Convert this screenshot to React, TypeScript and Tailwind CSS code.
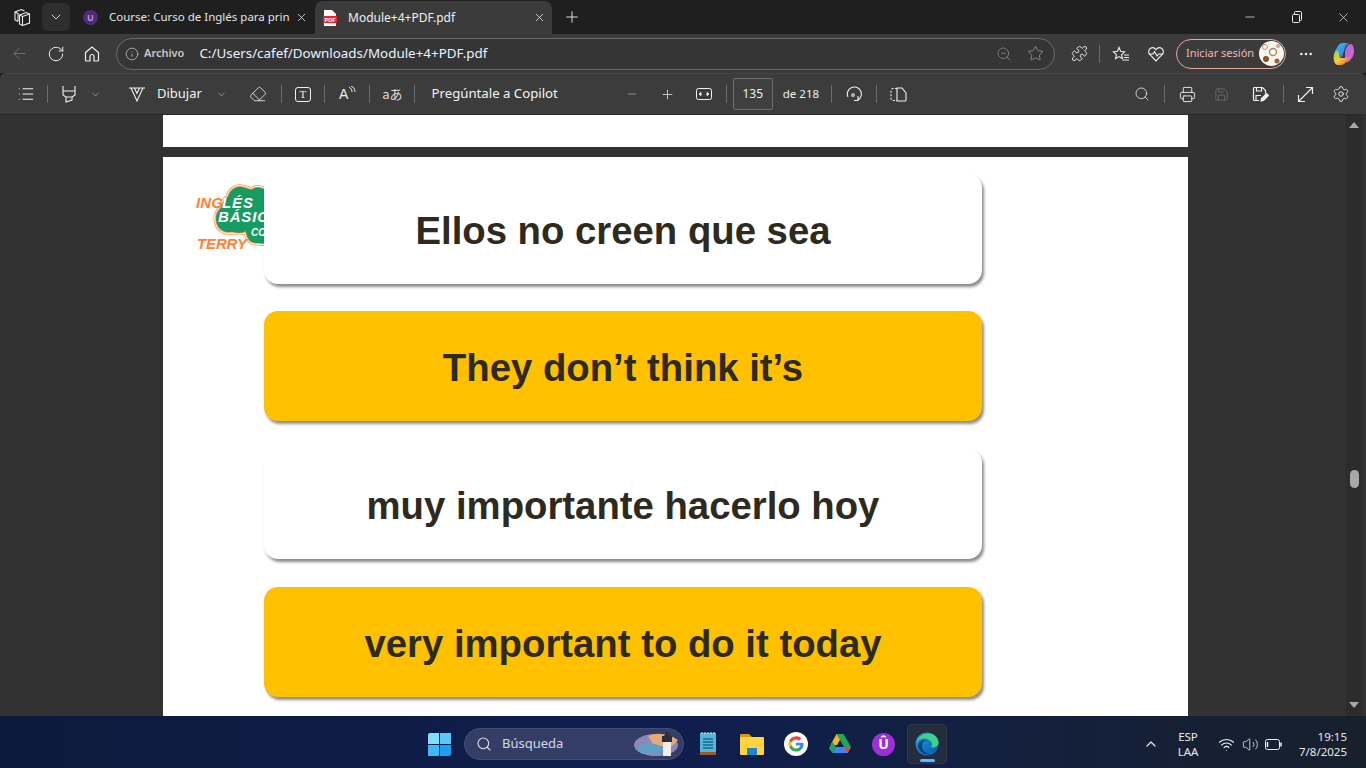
import {
  ArrowLeft, RotateCw, Info, ZoomOut, Star, Puzzle, ChevronDown, ChevronUp, X, Plus, Minus, List,
  Eraser, Search, Printer, Save, Settings, MoreHorizontal, Wifi, Volume2,
} from 'lucide-react';

const ui = 'font-["Noto_Sans",sans-serif]';

const Sep = ({ className }: { className: string }) => <div className={`w-px h-[18px] bg-[#6b6b6b] shrink-0 ${className}`} />;

const Cards = [
  { text: 'Ellos no creen que sea', bg: 'bg-white', mt: 'mt-0' },
  { text: 'They don’t think it’s', bg: 'bg-[#ffc000]', mt: 'mt-[27px]' },
  { text: 'muy importante hacerlo hoy', bg: 'bg-white', mt: 'mt-[28px]' },
  { text: 'very important to do it today', bg: 'bg-[#ffc000]', mt: 'mt-[28px]' },
];

const Logo = () => (
  <svg viewBox="0 0 70 70" className="absolute left-[33px] top-[26px] w-[70px] h-[70px]">
    <path
      d="M31 13C33 6 40 1 47 3C52 4 54 6 56 5C60 2 68 3 72 8L72 62L58 61C52 60 50 55 49 50C44 52 40 51 36 50C28 52 20 47 19 38C18 32 20 28 24 24C25 19 27 16 31 13Z"
      fill="#169b62"
      stroke="#ff9a55"
      strokeWidth="2.600"
    />
    <path
      d="M31 13C33 6 40 1 47 3C52 4 54 6 56 5C60 2 68 3 72 8L72 62L58 61C52 60 50 55 49 50C44 52 40 51 36 50C28 52 20 47 19 38C18 32 20 28 24 24C25 19 27 16 31 13Z"
      fill="none"
      stroke="#fff"
      strokeWidth="1"
    />
    <g fontFamily="Liberation Sans" fontWeight="700" fontStyle="italic">
      <text x="0" y="25" fontSize="15" fill="#ff8233" textLength="27">ING</text>
      <text x="26" y="25" fontSize="15" fill="#fff" textLength="31">LÉS</text>
      <text x="22" y="39" fontSize="15" fill="#fff" textLength="50">BÁSIC</text>
      <text x="55" y="53" fontSize="10" fill="#fff">CO</text>
      <text x="1" y="66" fontSize="15" fill="#ff8233" textLength="50">TERRY</text>
    </g>
  </svg>
);

const TabBar = () => (
  <div className="h-[34px] bg-[#1f1f1f] flex items-stretch text-white">
    <div className="w-[42px] pl-[1px] flex items-center justify-center">
      <svg width="18" height="18" viewBox="0 0 18 18" fill="none" stroke="#ececec" strokeWidth="1.100">
        <path d="M6.500 7l7-2.500 3 1.500v9l-7 2.500-3-1.500z" />
        <path d="M6.500 7l3 1.500 7-2.500M9.500 8.500v8.500" />
        <path d="M5 13.500l-3-1.500V4l6.500-2.500 3 1.500" />
        <path d="M2 4l3 1.500V13" />
      </svg>
    </div>
    <div className="w-[28px] h-[28px] mt-[3px] rounded-md bg-[#2e2e2e] flex items-center justify-center">
      <ChevronDown size={16} strokeWidth={1.400} color="#e0e0e0" />
    </div>
    <div className="w-[245px] flex items-center pl-[13px]">
      <div className="w-[15px] h-[15px] rounded-full bg-[#4f2a7a] flex items-center justify-center text-[9px] font-bold text-[#a79ac0] leading-none">U</div>
      <div className="ml-[8px] pl-[3px] w-[180px] whitespace-nowrap text-[11.500px] text-[#e4e4e4]">Course: Curso de Inglés para prin</div>
      <X size={13} strokeWidth={1.500} color="#e8e8e8" className="ml-[9px]" />
    </div>
    <div className="w-[237px] mt-[1px] bg-[#3b3b3b] rounded-t-lg flex items-center pl-[8px]">
      <svg width="14" height="16" viewBox="0 0 14 16">
        <path d="M1 0h8l4 4v12H1z" fill="#fff" />
        <rect x="0" y="6" width="14" height="7" fill="#e5252a" />
        <text x="7" y="12" fontSize="5.500" fontWeight="700" fill="#fff" textAnchor="middle" fontFamily="Liberation Sans">PDF</text>
      </svg>
      <div className="ml-[11px] w-[185px] text-[12px] text-[#efefef]">Module+4+PDF.pdf</div>
      <X size={13} strokeWidth={1.500} color="#e8e8e8" />
    </div>
    <div className="ml-[11px] flex items-center">
      <Plus size={18} strokeWidth={1.200} color="#f0f0f0" />
    </div>
    <div className="ml-auto flex items-center pr-[15px]">
      <Minus size={14} strokeWidth={1.200} color="#eee" />
      <svg width="12" height="12" viewBox="0 0 12 12" fill="none" stroke="#eee" className="ml-[34px]">
        <rect x="1.500" y="3.500" width="7" height="8" rx="1" />
        <path d="M3.500 3.500V1.500a1 1 0 0 1 1-1h5a1 1 0 0 1 1 1v7a1 1 0 0 1-1 1h-1" />
      </svg>
      <X size={15} strokeWidth={1.100} color="#eee" className="ml-[33px]" />
    </div>
  </div>
);

const AddressBar = () => (
  <div className="h-[39px] bg-[#3b3b3b] flex items-center text-white">
    <ArrowLeft size={19} strokeWidth={1.100} color="#777" className="ml-[10px]" />
    <RotateCw size={18} strokeWidth={1.300} color="#f0f0f0" className="ml-[18px]" />
    <svg width="18" height="18" viewBox="0 0 18 18" fill="none" stroke="#f0f0f0" strokeWidth="1.200" className="ml-[18px]">
      <path d="M2.500 7.500L9 2l6.500 5.500V15a1 1 0 0 1-1 1H11v-4.500a2 2 0 0 0-4 0V16H3.500a1 1 0 0 1-1-1z" />
    </svg>
    <div className="ml-[15px] w-[939px] h-[32px] rounded-full border border-[#6a6a6a] bg-[#353535] flex items-center pl-[8px]">
      <Info size={14} strokeWidth={1.200} color="#d0d0d0" />
      <span className="ml-[5px] text-[11px] font-semibold text-[#c8c8c8]">Archivo</span>
      <span className="ml-[15px] text-[13.400px] text-[#eaf2ff]">C:/Users/cafef/Downloads/Module+4+PDF.pdf</span>
      <ZoomOut size={16} strokeWidth={1.100} color="#8f8f8f" className="ml-auto" />
      <Star size={17} strokeWidth={1.100} color="#9c9c9c" className="ml-[15px] mr-[10px]" />
    </div>
    <Puzzle size={17} strokeWidth={1.300} color="#f0f0f0" className="ml-[16px]" />
    <Sep className="ml-[11px]" />
    <svg width="18" height="18" viewBox="0 0 18 18" fill="none" stroke="#f0f0f0" strokeWidth="1.100" className="ml-[12px]">
      <path d="M7 2.500l1.600 3.800 4 .5-3 2.800.8 4-3.400-2-3.400 2 .8-4-3-2.800 4-.5z" />
      <path d="M12 10h5M12 12.500h5M10.500 15h6.500" />
    </svg>
    <svg width="18" height="18" viewBox="0 0 18 18" fill="none" stroke="#f0f0f0" strokeWidth="1.100" className="ml-[17px]">
      <path d="M9 16L2.800 9.500C1 7.500 1.500 4.500 3.500 3.300 5.500 2.200 7.800 3 9 4.800 10.200 3 12.500 2.200 14.500 3.300 16.500 4.500 17 7.500 15.200 9.500z" />
      <path d="M1.500 9h4.500l1.500-2.500L10 11l1.500-2h5" />
    </svg>
    <div className="ml-[11px] w-[110px] h-[30px] rounded-full border border-[#e2a8a2] flex items-center pl-[9px]">
      <span className="text-[11px] text-[#f2b8b0]">Iniciar sesión</span>
      <svg width="25" height="25" viewBox="0 0 25 25" className="ml-auto mr-[1px]">
        <circle cx="12.500" cy="12.500" r="12.500" fill="#f8f4ee" />
        <circle cx="6" cy="6" r="2.500" fill="none" stroke="#b89478" />
        <circle cx="14" cy="11" r="3.500" fill="none" stroke="#a88468" strokeWidth="1.300" />
        <circle cx="7" cy="18" r="3" fill="#8a5026" />
        <circle cx="18" cy="20" r="2.500" fill="#9a6436" />
        <circle cx="19" cy="5" r="2" fill="#c9a98e" />
      </svg>
    </div>
    <MoreHorizontal size={16} strokeWidth={1.800} color="#f0f0f0" className="ml-[12px]" />
    <svg width="24" height="24" viewBox="0 0 24 24" className="ml-[17px]">
      <defs>
        <linearGradient id="cpa" x1="0" y1="0" x2="1" y2="1">
          <stop offset="0" stopColor="#2fc4e8" />
          <stop offset="1" stopColor="#3a6fe8" />
        </linearGradient>
        <linearGradient id="cpb" x1="0" y1="0" x2="1" y2="1">
          <stop offset="0" stopColor="#8fd14f" />
          <stop offset="0.500" stopColor="#f7c93e" />
          <stop offset="1" stopColor="#f0533a" />
        </linearGradient>
        <linearGradient id="cpc" x1="0" y1="0" x2="1" y2="1">
          <stop offset="0" stopColor="#a56ae8" />
          <stop offset="1" stopColor="#ec5fc0" />
        </linearGradient>
      </defs>
      <path d="M14 9c1-3 3-7 5-7 3 0 4 3 4 7 0 5-3 9-6 11-2 1-4 0-3-4z" fill="url(#cpc)" />
      <path d="M6 6C7 3 9 1 12 1h6c-3 1-4 4-5 8l-2 6H6C2 15 3 9 6 6z" fill="url(#cpa)" />
      <path d="M3 12c1-3 3-4 4-3 1 1 1 3 1 5 0 2 2 2 5 2l5-1c-2 4-4 8-8 8H7c-4 0-5-6-4-11z" fill="url(#cpb)" />
    </svg>
  </div>
);

const PdfToolbar = () => (
  <div className="h-[42px] bg-[#3c3c3c] border-t border-[#444] border-b-[#2a2a2a] border-b rounded-t-md flex items-center text-white">
    <List size={18} strokeWidth={1.400} color="#f4f4f4" className="ml-[17px]" />
    <Sep className="ml-[12px]" />
    <svg width="16" height="18" viewBox="0 0 16 18" fill="none" stroke="#f0f0f0" strokeWidth="1.100" className="ml-[13px]">
      <path d="M2 1v5h12V1M2 6v4l3 2v5l6-2v-3l3-2V6M5 12h6" />
    </svg>
    <ChevronDown size={11} strokeWidth={1.300} color="#c8c8c8" className="ml-[13px]" />
    <svg width="18" height="18" viewBox="0 0 18 18" fill="none" stroke="#f0f0f0" strokeWidth="1.100" className="ml-[27px]">
      <path d="M1 3h16M3 3l6 13 6-13M6.500 3L9 8.500 11.500 3" />
    </svg>
    <span className="ml-[11px] text-[13px] text-[#f2f2f2]">Dibujar</span>
    <ChevronDown size={11} strokeWidth={1.300} color="#c8c8c8" className="ml-[14px]" />
    <Eraser size={18} strokeWidth={1.100} color="#f0f0f0" className="ml-[22px]" />
    <Sep className="ml-[14px]" />
    <div className="ml-[13px] w-[16px] h-[15px] border border-[#f0f0f0] rounded-[3px] flex items-center justify-center text-[11px] leading-none font-['Liberation_Serif',serif] text-[#f0f0f0]">T</div>
    <Sep className="ml-[13px]" />
    <span className="ml-[14px] text-[14px] text-[#eee] font-['Liberation_Sans',sans-serif] leading-none">A</span>
    <svg width="8" height="10" viewBox="0 0 8 10" fill="none" stroke="#eee" className="mb-[6px]">
      <path d="M1 1c2 1 3 3 3 5M3 0c3 1 4 4 4 6" />
    </svg>
    <Sep className="ml-[13px]" />
    <span className="ml-[12px] text-[13px] text-[#ddd] font-['Noto_Sans_CJK_JP',sans-serif]">aあ</span>
    <Sep className="ml-[11px]" />
    <span className="ml-[17px] text-[13.200px] text-[#f4f4f4]">Pregúntale a Copilot</span>
    <Minus size={12} strokeWidth={1.500} color="#aaa" className="ml-[68px]" />
    <Plus size={15} strokeWidth={1.200} color="#f0f0f0" className="ml-[22px]" />
    <svg width="16" height="14" viewBox="0 0 16 14" fill="none" stroke="#f0f0f0" className="ml-[21px]">
      <rect x="0.500" y="1.500" width="15" height="11" rx="2" />
      <path d="M3 7l2-1.500v3zM13 7l-2-1.500v3z" fill="#f0f0f0" />
    </svg>
    <Sep className="ml-[14px]" />
    <div className="ml-[6px] w-[40px] h-[32px] bg-[#3f3f3f] border border-[#6e6e6e] rounded-[2px] flex items-center justify-center text-[12px] text-[#f0f0f0]">135</div>
    <span className="ml-[10px] text-[11.500px] text-[#f0f0f0]">de 218</span>
    <Sep className="ml-[12px]" />
    <svg width="17" height="17" viewBox="0 0 17 17" fill="none" stroke="#f0f0f0" strokeWidth="1.100" className="ml-[13px]">
      <path d="M3 11A7 7 0 1 1 13 14M13 10v4.500H9" />
      <circle cx="8" cy="9" r="1.300" />
    </svg>
    <Sep className="ml-[14px]" />
    <svg width="17" height="15" viewBox="0 0 17 15" fill="none" stroke="#f0f0f0" strokeWidth="1.100" className="ml-[13px]">
      <path d="M7 1.500H3a2 2 0 0 0-2 2v8a2 2 0 0 0 2 2h4" strokeDasharray="2 1.500" />
      <path d="M7 1v13h8a1 1 0 0 0 1-1V6l-4-5z" />
    </svg>
    <Search size={16} strokeWidth={1.200} color="#f0f0f0" className="ml-[227px]" />
    <Sep className="ml-[14px]" />
    <Printer size={17} strokeWidth={1.300} color="#f0f0f0" className="ml-[14px]" />
    <Save size={15} strokeWidth={1.100} color="#777" className="ml-[18px]" />
    <svg width="18" height="18" viewBox="0 0 18 18" fill="none" stroke="#f0f0f0" strokeWidth="1.200" className="ml-[22px]">
      <path d="M8 15.500H3.500a1 1 0 0 1-1-1v-11a1 1 0 0 1 1-1h8l3 3v3" />
      <path d="M5.500 2.500v3.500h5V2.500M5 15v-4.500h5" />
      <path d="M10 16l.5-2.500 5-5 2 2-5 5z" fill="#f0f0f0" />
    </svg>
    <Sep className="ml-[14px]" />
    <svg width="17" height="17" viewBox="0 0 17 17" fill="none" stroke="#f0f0f0" strokeWidth="1.200" className="ml-[13px]">
      <path d="M1.500 15.500L15.500 1.500M9 1.500h6.500V8M1.500 9v6.500H8" />
    </svg>
    <Settings size={18} strokeWidth={1.200} color="#f0f0f0" className="ml-[18px]" />
  </div>
);

const Viewer = () => (
  <div className="relative h-[601px] bg-[#323232] overflow-hidden">
    <div className="ml-[163px] w-[1025px] h-[32px] bg-white" />
    <div className="relative ml-[163px] w-[1025px] h-[600px] mt-[10px] bg-white pl-[101px] pt-[17px] font-['Liberation_Sans',sans-serif]">
      <Logo />
      {Cards.map((card, index) => (
        <div
          key={index}
          className={`relative w-[718px] h-[110px] pt-[3px] rounded-[14px] flex items-center justify-center text-[38.300px] font-bold text-[#2d2a20] shadow-[2px_3px_3px_rgba(0,0,0,0.45)] ${card.bg} ${card.mt}`}
        >
          {card.text}
        </div>
      ))}
    </div>
    {/* scrollbar */}
    <div className="absolute right-[4px] top-0 bottom-0 w-[16px] bg-[#2c2c2c] flex flex-col items-center pt-[7px] pb-[8px]">
      <div className="w-0 h-0 border-l-[5px] border-r-[5px] border-b-[6px] border-l-transparent border-r-transparent border-b-[#a8a8a8]" />
      <div className="mt-[342px] w-[9px] h-[18px] rounded-full bg-[#a8a8a8]" />
      <div className="mt-auto w-0 h-0 border-l-[5px] border-r-[5px] border-t-[6px] border-l-transparent border-r-transparent border-t-[#a8a8a8]" />
    </div>
  </div>
);

const Taskbar = () => (
  <div className="h-[52px] pt-[4px] bg-gradient-to-r from-[#0e1a3c] via-[#0f1e4e] to-[#18202c] flex items-center text-white">
    <div className="ml-[428px] grid grid-cols-2 gap-[1px] w-[23px] h-[23px]">
      <div className="bg-[#7fdcfb] rounded-tl-[2px]" />
      <div className="bg-[#58c8f8]" />
      <div className="bg-[#40b8f5]" />
      <div className="bg-[#1c9ff0] rounded-br-[2px]" />
    </div>
    <div className="ml-[13px] w-[220px] h-[32px] rounded-full bg-[#333d66] border border-[#444e75] flex items-center pl-[11px] relative">
      <Search size={16} strokeWidth={1.600} color="#e6e6e6" />
      <span className="ml-[10px] text-[13px] text-[#d5d8e4]">Búsqueda</span>
      <svg width="48" height="28" viewBox="0 0 48 28" className="ml-auto mr-[1px]">
        <ellipse cx="22" cy="15" rx="22" ry="11" fill="#8f86b8" />
        <path d="M14 6c8-4 20-3 30 4l-6 6H20z" fill="#e8a878" />
        <path d="M2 18c8-6 20-6 28 0v6H8z" fill="#5f9fc4" />
        <rect x="29" y="12" width="8" height="14" fill="#f0ece6" />
        <rect x="28" y="6" width="10" height="6" fill="#2c2c3a" />
        <path d="M30 6l3-5 3 5z" fill="#2c2c3a" />
      </svg>
    </div>
    <svg width="18" height="24" viewBox="0 0 18 24" className="ml-[15px]">
      <rect x="1" y="1" width="16" height="22" fill="#4fb6dc" />
      <rect x="1" y="20" width="16" height="3" fill="#9a5b2c" />
      <path d="M4 7h10M4 10h10M4 13h10M4 16h10" stroke="#0f3f5c" />
      <path d="M3 0v2M6 0v2M9 0v2M12 0v2M15 0v2" stroke="#e8f4fa" />
    </svg>
    <svg width="24" height="22" viewBox="0 0 24 22" className="ml-[23px]">
      <path d="M0 2a1 1 0 0 1 1-1h8l3 3H0z" fill="#d99a14" />
      <rect x="0" y="4" width="24" height="18" rx="1" fill="#ffd23f" />
      <rect x="7" y="15" width="10" height="7" rx="1" fill="#1a86d0" />
    </svg>
    <div className="ml-[20px] w-[24px] h-[24px] rounded-full bg-white flex items-center justify-center">
      <svg width="18" height="18" viewBox="0 0 24 24">
        <path d="M22 12.200c0-.7-.1-1.400-.2-2H12v3.900h5.600a4.800 4.800 0 0 1-2.100 3.100v2.600h3.400c2-1.800 3.100-4.500 3.100-7.600z" fill="#4285f4" />
        <path d="M12 22c2.800 0 5.200-.9 6.900-2.500l-3.400-2.600c-.9.600-2.100 1-3.500 1-2.700 0-5-1.800-5.800-4.300H3.200v2.700A10 10 0 0 0 12 22z" fill="#34a853" />
        <path d="M6.200 13.600a6 6 0 0 1 0-3.800V7.100H3.200a10 10 0 0 0 0 9.200z" fill="#fbbc05" />
        <path d="M12 6c1.500 0 2.900.5 4 1.500l3-3A10 10 0 0 0 3.200 7.100l3 2.700C7 7.800 9.300 6 12 6z" fill="#ea4335" />
      </svg>
    </div>
    <svg width="22" height="20" viewBox="0 0 22 20" className="ml-[21px]">
      <path d="M7.500 0h7L8 11H1.500z" fill="#f8bc15" />
      <path d="M14.500 0L22 13h-7L7.500 0z" fill="#1fa463" />
      <path d="M0 14l3.500-6L7 14 3.500 19z" fill="#1967d2" />
      <path d="M7 13h15l-3.500 6H3.500z" fill="#4285f4" />
      <path d="M0 14l3.500-6 3.500 5-3.500 6z" fill="#1fa463" />
      <path d="M14.500 13H22l-3.500 6z" fill="#ea4335" />
    </svg>
    <div className="ml-[21px] w-[23px] h-[23px] rounded-full bg-[#9b30d9] flex items-center justify-center text-[14px] font-bold text-white leading-none">Û</div>
    <div className="ml-[12px] w-[40px] h-[40px] rounded-[4px] bg-[#242c3e] border border-[#2f3749] flex flex-col items-center relative">
      <svg width="24" height="24" viewBox="0 0 24 24" className="mt-[7px]">
        <defs>
          <linearGradient id="edge" x1="0" y1="0" x2="1" y2="1">
            <stop offset="0" stopColor="#1b9de2" />
            <stop offset="1" stopColor="#0c59a4" />
          </linearGradient>
        </defs>
        <circle cx="12" cy="12" r="11.500" fill="url(#edge)" />
        <path d="M1 11C3 3 12-1 19 3c3 2 5 5 4.500 9-1 3-5 4-8 3 2-1 2-4 0-6-4-4-12-3-14.500 2z" fill="#3fd08a" />
        <path d="M11 8c-4 1-5 6-3 10 1 2 4 4 8 4-6 2-12-2-13-8 0-3 4-7 8-6z" fill="#0b3f86" />
      </svg>
      <div className="absolute bottom-[1px] w-[15px] h-[3px] rounded-full bg-[#4cc2ff]" />
    </div>
    <ChevronUp size={16} strokeWidth={1.800} color="#e8e8e8" className="ml-[196px]" />
    <div className="ml-[11px] w-[36px] flex flex-col items-center text-[11.500px] leading-[15px] text-[#e8e8e8]">
      <span>ESP</span>
      <span>LAA</span>
    </div>
    <Wifi size={17} strokeWidth={1.500} color="#f0f0f0" className="ml-[12px]" />
    <Volume2 size={17} strokeWidth={1.100} color="#f0f0f0" className="ml-[7px]" />
    <svg width="17" height="11" viewBox="0 0 17 11" fill="none" stroke="#f0f0f0" className="ml-[6px]">
      <rect x="0.500" y="0.500" width="14" height="10" rx="2" />
      <path d="M16 3.500v4" strokeWidth="1.500" />
      <path d="M2.500 3v5" strokeWidth="1.500" />
    </svg>
    <div className="ml-auto mr-[19px] flex flex-col items-end text-[11.500px] leading-[15px] text-[#e8e8e8]">
      <span>19:15</span>
      <span>7/8/2025</span>
    </div>
  </div>
);

export default function App() {
  return (
    <div className={`w-[1366px] h-[768px] overflow-hidden bg-[#1f1f1f] ${ui}`}>
      <TabBar />
      <AddressBar />
      <PdfToolbar />
      <Viewer />
      <Taskbar />
    </div>
  );
}
